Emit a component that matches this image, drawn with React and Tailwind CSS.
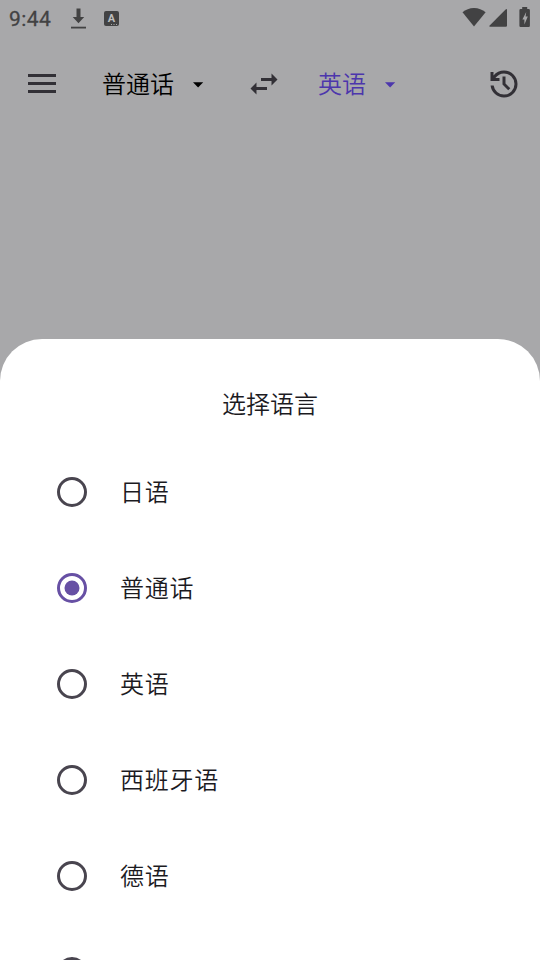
import React, {useState} from "react";

const languages = [
    {id: 'ja', name: '日语'},
    {id: 'zh', name: '普通话'},
    {id: 'en', name: '英语'},
    {id: 'es', name: '西班牙语'},
    {id: 'de', name: '德语'},
    {id: 'other', name: ''}
];

const StatusBar = () => {
    return <div className="flex h-9 items-start justify-between text-[#424243]">
        <div className="flex items-start">
            <span className="ml-[9px] mt-[7px] w-[60px] font-[Roboto] text-[21px] leading-6 tracking-[0.4px] [-webkit-text-stroke:0.3px]">9:44</span>
            <svg className="ml-[2px] mt-[8px]" width="16" height="21" viewBox="0 0 16 21" fill="currentColor">
                <path d="M5.5 0.5h4V9h3.7L7.5 15.2 1.7 9h3.8z" />
                <path d="M0 18.7h15v1.8H0z" />
            </svg>
            <div className="ml-[17px] mt-[11px] flex h-[15px] w-[15px] items-center justify-center relative rounded-[2px] bg-[#424243] font-[Roboto] text-[11px] font-bold leading-none text-[#bdbdbe]">
                A
                <svg className="absolute bottom-[1px] right-[1px]" width="7" height="1" fill="#a8a8aa">
                    <path d="M0 0h1v1H0zM2.5 0h1v1h-1zM5 0h1v1H5z" />
                </svg>
            </div>
        </div>
        <svg className="mr-[9px] mt-[7px]" width="69" height="21" viewBox="0 0 69 21" fill="currentColor">
            <path d="M0.5 5.3C3.5 2.6 7.6 1 12 1s8.5 1.6 11.6 4.3L12 19.4z" />
            <path d="M45 3v15.6q0 1.2-1.2 1.2H28.2q-1.6 0-0.5-1.2L43.6 2.6Q45 1.2 45 3z" />
            <path fillRule="evenodd" d="M60.2 0h5v2h1.5q1.2 0 1.2 1.2v15.6q0 1.2-1.2 1.2h-8.1q-1.2 0-1.2-1.2V3.2q0-1.2 1.2-1.2h1.6zM64.2 5l-3.8 7.4h2V17.4l3.4-8h-2.2z" />
        </svg>
    </div>
};

const Caret = ({className}) => {
    return <svg className={className} width="11" height="6" viewBox="0 0 11 6" fill="currentColor">
        <path d="M0 0.2h10.2L5.1 5.4z" />
    </svg>
};

const TopBar = () => {
    return <div className="flex h-24 items-center text-[#323036]">
        <svg className="ml-7 mb-px" width="28" height="19" viewBox="0 0 28 19" fill="currentColor">
            <path d="M0 0h28v3H0zM0 8h28v3H0zM0 16h28v3H0z" />
        </svg>
        <button className="ml-[46px] mb-[2px] flex w-[102px] items-center whitespace-nowrap text-2xl font-[350] text-black">
            普通话
            <Caret className="ml-[19px] mt-1" />
        </button>
        <svg className="ml-[42px]" width="36" height="36" viewBox="0 0 24 24" fill="currentColor">
            <path d="M6.99 11L3 15l3.99 4v-3H14v-2H6.99v-3zM21 9l-3.99-4v3H10v2h7.01v3L21 9z" />
        </svg>
        <button className="ml-9 mb-[2px] flex w-[78px] items-center whitespace-nowrap text-2xl font-[350] text-[#4c36ac]">
            英语
            <Caret className="ml-[19px] mt-1" />
        </button>
        <svg className="ml-auto mr-[18px]" width="36" height="36" viewBox="0 -960 960 960" fill="currentColor">
            <path d="M480-120q-138 0-240.5-91.5T122-440h82q14 104 92.5 172T480-200q117 0 198.5-81.5T760-480q0-117-81.5-198.5T480-760q-69 0-129 32t-101 88h110v80H120v-240h80v94q51-64 124.5-99T480-840q75 0 140.5 28.5t114 77q48.5 48.5 77 114T840-480q0 75-28.5 140.5t-77 114q-48.5 48.5-114 77T480-120Zm112-192L440-464v-216h80v184l128 128-56 56Z" />
        </svg>
    </div>
};

const Radio = ({selected}) => {
    return <svg className={selected ? 'text-[#6750a4]' : 'text-[#49454f]'} width="30" height="30" viewBox="0 0 30 30">
        <circle cx="15" cy="15" r="13.5" fill="none" stroke="currentColor" strokeWidth="3" />
        {selected && <circle cx="15" cy="15" r="7.5" fill="currentColor" />}
    </svg>
};

const LanguageOption = ({language, selected, onSelect}) => {
    return <button className="flex h-24 w-full shrink-0 items-center pl-[57px] text-left" onClick={() => onSelect(language.id)}>
        <Radio selected={selected} />
        <span className="ml-[33px] mb-[2px] text-2xl font-[350] tracking-[0.75px] text-[#1c1b1f]">{language.name}</span>
    </button>
};

const App = () => {
    const [selectedId, setSelectedId] = useState('zh');

    return <div className="flex h-[960px] w-[540px] flex-col overflow-hidden bg-[#a8a8aa] font-['Noto_Sans_CJK_SC',sans-serif]">
        <StatusBar />
        <TopBar />
        <div className="mt-[207px] flex flex-1 flex-col overflow-hidden rounded-t-[42px] bg-white">
            <h1 className="mt-[48px] mb-[25px] h-8 shrink-0 text-center text-2xl leading-8 font-[350] text-[#1c1b1f]">选择语言</h1>
            {languages.map((language) => (
                <LanguageOption
                    key={language.id}
                    language={language}
                    selected={language.id === selectedId}
                    onSelect={setSelectedId}
                />
            ))}
        </div>
    </div>
};

export default App;
